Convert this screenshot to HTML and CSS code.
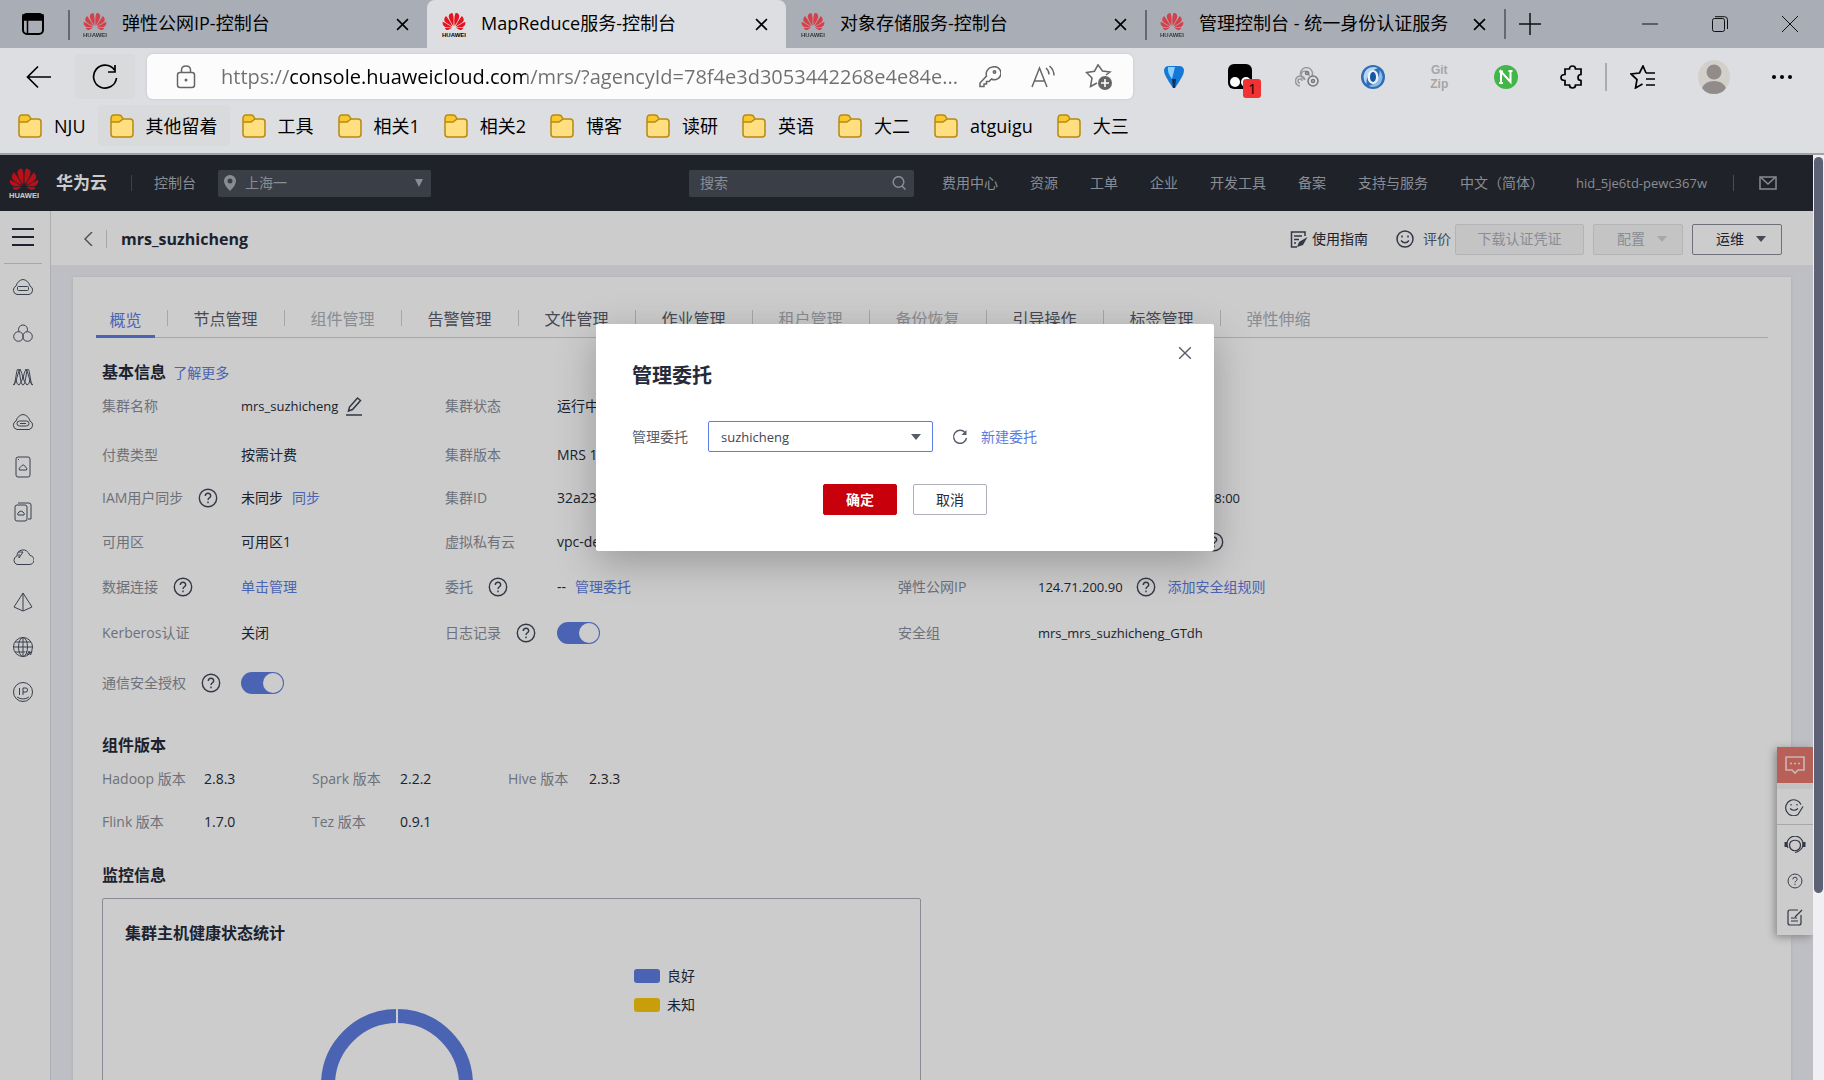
FILE: index.html
```html
<!DOCTYPE html>
<html lang="zh-CN">
<head>
<meta charset="utf-8">
<title>MapReduce服务-控制台</title>
<link rel="stylesheet" href="styles.css">
</head>
<body>
<svg class="defs" aria-hidden="true">
  <symbol id="petals" viewBox="0 2 24 20"><path d="M3.67 6.14S1.82 7.91 1.72 9.78v.35c.08 1.51 1.22 2.4 1.22 2.4 1.83 1.79 6.26 4.04 7.3 4.55 0 0 .06.03.1-.01l.02-.04v-.04C7.52 10.8 3.67 6.14 3.67 6.14zM9.65 18.6c-.02-.08-.1-.08-.1-.08l-7.38.26c.8 1.43 2.15 2.53 3.56 2.2.96-.25 3.16-1.78 3.88-2.3.06-.05.04-.09.04-.09zm.08-.78C6.49 15.63.21 12.28.21 12.28c-.15.46-.2.9-.21 1.3v.07c0 1.07.4 1.82.4 1.82.8 1.69 2.34 2.2 2.34 2.2.7.3 1.4.31 1.4.31.12.02 4.4 0 5.54 0 .05 0 .08-.05.08-.05v-.06c0-.03-.03-.05-.03-.05zM9.06 3.19a3.42 3.42 0 0 0-2.57 3.15v.41c.03.6.16 1.05.16 1.05.66 2.9 3.86 7.65 4.55 8.65.05.05.1.03.1.03a.1.1 0 0 0 .06-.1c1.06-10.6-1.11-13.42-1.11-13.42-.32.02-1.19.23-1.19.23zm8.299 2.27s-.49-1.8-2.44-2.28c0 0-.57-.14-1.17-.22 0 0-2.18 2.81-1.12 13.43.01.07.06.08.06.08.07.03.1-.03.1-.03.72-1.03 3.9-5.76 4.55-8.64 0 0 .36-1.4.02-2.34zm-2.92 13.07s-.07 0-.09.05c0 0-.01.07.03.1.7.51 2.85 2 3.88 2.3 0 0 .16.05.43.06h.14c.69-.02 1.9-.37 3-2.26l-7.4-.25zm7.83-8.41c.14-2.06-1.94-3.97-1.94-3.98 0 0-3.85 4.66-6.67 10.8 0 0-.03.08.02.13l.04.01h.06c1.06-.53 5.46-2.77 7.28-4.54 0 0 1.15-.93 1.21-2.42zm1.52 2.14s-6.28 3.37-9.52 5.55c0 0-.05.04-.03.11 0 0 .03.06.07.06 1.16 0 5.56 0 5.67-.02 0 0 .57-.02 1.27-.29 0 0 1.56-.5 2.37-2.27 0 0 .73-1.45.17-3.14z"/></symbol>
  <symbol id="brand" viewBox="0 0 24 25"><use href="#petals" x="0" y="0" width="24" height="19" class="brand-mark"/><text x="12" y="24.500" text-anchor="middle" class="brand-word">HUAWEI</text></symbol>
  <symbol id="x" viewBox="0 0 12 12"><path d="M1 1l10 10M11 1L1 11"/></symbol>
  <symbol id="folder" viewBox="0 0 24 24"><path d="M1 6v14q0 3 3 3h16q3 0 3-3V8q0-3-3-3h-8" fill="#ffdf80"/><path d="M1 5q0-4 3-4h5q2 0 3 2l1 2-3 3H1z" fill="#f9c82f"/><path d="M1 5q0-4 3-4h5q2 0 3 2l1 2h7q3 0 3 3v12q0 3-3 3H4q-3 0-3-3zM1 8h8l4-3" fill="none" stroke="#b68a10" stroke-width="1.500"/></symbol>
  <symbol id="help" viewBox="0 0 20 20"><circle cx="10" cy="10" r="8.700"/><path d="M7.300 8q0-2.800 2.700-2.800T12.700 8c0 1.700-2.700 2-2.700 4M10 13.500v1.700"/></symbol>
</svg>

<header class="browser">
  <div class="titlebar">
    <button class="tab-actions" aria-label="标签操作"><svg width="22" height="22" viewBox="0 0 22 22"><rect x="1" y="1" width="20" height="20" rx="4" fill="none" stroke="#000" stroke-width="2"/><path d="M1 2h20v5H1zM5.500 7v13" stroke="#000" stroke-width="1.500"/></svg></button>
    <nav class="tabs">
      <div class="tab faded"><svg class="favicon"><use href="#brand"/></svg><span>弹性公网IP-控制台</span><button class="tab-close" aria-label="关闭"><svg><use href="#x"/></svg></button></div>
      <div class="tab active"><svg class="favicon"><use href="#brand"/></svg><span>MapReduce服务-控制台</span><button class="tab-close" aria-label="关闭"><svg><use href="#x"/></svg></button></div>
      <div class="tab faded"><svg class="favicon"><use href="#brand"/></svg><span>对象存储服务-控制台</span><button class="tab-close" aria-label="关闭"><svg><use href="#x"/></svg></button></div>
      <div class="tab faded ruled"><svg class="favicon"><use href="#brand"/></svg><span>管理控制台 - 统一身份认证服务</span><button class="tab-close" aria-label="关闭"><svg><use href="#x"/></svg></button></div>
    </nav>
    <button class="new-tab" aria-label="新建标签页"><svg width="22" height="22" viewBox="0 0 22 22"><path d="M11 0v22M0 11h22" stroke="#111" stroke-width="1.500"/></svg></button>
    <div class="window-buttons">
      <button aria-label="最小化"><svg width="16" height="16" viewBox="0 0 16 16"><path d="M0 8h16"/></svg></button>
      <button aria-label="还原"><svg width="16" height="16" viewBox="0 0 16 16"><rect x=".5" y="2.500" width="12" height="13" rx="2"/><path d="M3 .7h9.500q3 0 3 3V13"/></svg></button>
      <button aria-label="关闭窗口"><svg width="16" height="16" viewBox="0 0 16 16"><path d="M0 0l16 16M16 0L0 16"/></svg></button>
    </div>
  </div>

  <div class="toolbar">
    <button class="nav-button" aria-label="返回"><svg width="26" height="24" viewBox="0 0 26 24"><path d="M25 12H2M12 1.500L1.500 12 12 22.500" class="ink"/></svg></button>
    <button class="nav-button hovered" aria-label="刷新"><svg width="26" height="26" viewBox="0 0 26 26"><path d="M22.500 6A11.500 11.500 0 1 0 24.500 14M23 1v7h-7" class="ink"/></svg></button>
    <div class="address">
      <svg width="20" height="24" viewBox="0 0 20 24"><rect x="1.500" y="7.500" width="17" height="15" rx="2.500" class="soft"/><path d="M5.500 7.500V5q0-4 4.500-4t4.500 4v2.500" class="soft"/><circle cx="10" cy="15" r="1.500" fill="#666"/></svg>
      <input type="text" aria-label="地址" value="https://console.huaweicloud.com/mrs/?agencyId=78f4e3d3053442268e4e84e...">
      <button aria-label="密码"><svg width="22" height="22" viewBox="0 0 22 22"><path d="M13.500 1a7 7 0 0 0-6 9L1 17v3.500h4V18h2.500v-2.500H10L12.500 13A6.500 6.500 0 1 0 13.500 1z" class="soft"/><circle cx="15.500" cy="6" r="1.200" class="soft"/></svg></button>
      <button aria-label="大声朗读"><svg width="24" height="24" viewBox="0 0 24 24"><path d="M1 22L8.500 3 16 22M3.500 16h10M15 3q3 2.500 3 6.500M18.500 1Q23 5 23 10.500" class="soft"/></svg></button>
      <button aria-label="收藏"><svg width="28" height="26" viewBox="0 0 28 26"><path d="M21 11l4-3-7.500-1L13 .8 9.500 7.200 1.500 8.500 7 14 5.500 22.500 12 19" class="soft"/><circle cx="20" cy="19" r="7" fill="#666"/><path d="M20 15v8M16 19h8" stroke="#fff" stroke-width="1.600"/></svg></button>
    </div>
    <div class="extensions">
      <button aria-label="Balloon"><svg width="22" height="24" viewBox="0 0 22 24"><path d="M1 6Q1 1 6 1h10q5 0 5 5 0 4-9 17h-2Q1 10 1 6z" fill="#1478d4"/><path d="M5 2h7L9 14Q4 8 5 2z" fill="#8bd0ff"/><path d="M9 14h4l-1 9h-2z" fill="#12305a"/></svg></button>
      <button class="with-badge" aria-label="扩展"><svg width="24" height="26" viewBox="0 0 24 26"><rect width="24" height="25" rx="6"/><circle cx="7" cy="18" r="5" fill="#fff"/><circle cx="18" cy="18" r="5" fill="#fff"/></svg><span class="badge">1</span></button>
      <button aria-label="扩展"><svg width="24" height="20" viewBox="0 0 24 20" fill="none" stroke="#777" stroke-width="1.500"><path d="M6 9a6 6 0 1 1 11 0M9 12a4 4 0 1 1 5-3" stroke="#999"/><circle cx="12" cy="6" r="1.500"/><path d="M5 19A5 5 0 0 1 6 9q3 0 4 4M5 16a2 2 0 1 1 2-2" stroke="#999"/><circle cx="18" cy="14" r="5"/><circle cx="18" cy="14" r="1.500"/></svg></button>
      <button aria-label="扩展"><svg width="26" height="26" viewBox="0 0 26 26"><circle cx="13" cy="13" r="12" fill="#2f6db5"/><path d="M14 3Q5 3 3.500 12q0 5 3 8Q6 8 18 4z" fill="#b5d6f2"/><path d="M12 23q9 0 10.500-9 0-5-3-8 .500 12-11 16z" fill="#8dbbe6"/><ellipse cx="13" cy="13" rx="5.500" ry="7" fill="#e8f2fb"/><ellipse cx="13" cy="13" rx="3" ry="5" fill="#1a55a0"/></svg></button>
      <button class="gitzip" aria-label="GitZip"><span>Git</span><span>Zip</span></button>
      <button class="green" aria-label="扩展"><svg width="24" height="24" viewBox="0 0 24 24"><circle cx="12" cy="12" r="12" fill="#43b649"/><path d="M7 18V6.500L16.500 17V6M5 6.500h4M14.500 6h4M5 18h4" fill="none" stroke="#fff" stroke-width="2"/></svg></button>
      <button aria-label="扩展管理"><svg width="24" height="24" viewBox="0 0 24 24"><path d="M5 4h4.500q0-3 3-3t3 3H21v5.500q-3 0-3 3t3 3V20h-5.500q0 3-3 3t-3-3H5v-4.500q-4 0-4-3t4-3z" class="ink"/></svg></button>
    </div>
    <div class="profile">
      <button aria-label="收藏夹"><svg width="26" height="24" viewBox="0 0 26 24"><path d="M16 8l-3-7-3.500 7L1 9l6 5.500L5.500 23l7-4M16 8h9M16 14h9M16 20h9" class="ink"/></svg></button>
      <button aria-label="个人资料"><svg width="32" height="34" viewBox="0 0 32 34"><ellipse cx="16" cy="17" rx="16" ry="17" fill="#d3d0cc"/><circle cx="16" cy="12" r="7.500" fill="#918c89"/><path d="M4 28q3-7 12-7t12 7q-4 6-12 6T4 28z" fill="#918c89"/></svg></button>
      <button aria-label="更多"><svg width="20" height="4" viewBox="0 0 20 4"><circle cx="2" cy="2" r="2"/><circle cx="10" cy="2" r="2"/><circle cx="18" cy="2" r="2"/></svg></button>
    </div>
  </div>

  <nav class="bookmarks">
    <a href="#"><svg><use href="#folder"/></svg>NJU</a>
    <a href="#" class="hovered"><svg><use href="#folder"/></svg>其他留着</a>
    <a href="#"><svg><use href="#folder"/></svg>工具</a>
    <a href="#"><svg><use href="#folder"/></svg>相关1</a>
    <a href="#"><svg><use href="#folder"/></svg>相关2</a>
    <a href="#"><svg><use href="#folder"/></svg>博客</a>
    <a href="#"><svg><use href="#folder"/></svg>读研</a>
    <a href="#"><svg><use href="#folder"/></svg>英语</a>
    <a href="#"><svg><use href="#folder"/></svg>大二</a>
    <a href="#"><svg><use href="#folder"/></svg>atguigu</a>
    <a href="#"><svg><use href="#folder"/></svg>大三</a>
  </nav>
</header>

<div class="viewport">
  <div class="console">
    <header class="cloud-bar">
      <a href="#" class="cloud-logo"><svg width="30" height="32"><use href="#brand"/></svg><strong>华为云</strong></a>
      <a href="#" class="console-link">控制台</a>
      <div class="region">
        <svg width="12" height="16" viewBox="0 0 12 16"><path d="M6 0a6 6 0 0 0-6 6q0 4 6 10 6-6 6-10a6 6 0 0 0-6-6zm0 3.500a2.500 2.500 0 1 1 0 5 2.500 2.500 0 0 1 0-5z" fill="#adb0b8" fill-rule="evenodd"/></svg>
        <select aria-label="区域"><option>上海一</option></select>
      </div>
      <div class="search"><input type="text" placeholder="搜索" aria-label="搜索"><svg width="14" height="14" viewBox="0 0 14 14"><circle cx="6.500" cy="6" r="5.300"/><path d="M10 10l3.500 3.500"/></svg></div>
      <nav class="cloud-menu">
        <a href="#">费用中心</a><a href="#">资源</a><a href="#">工单</a><a href="#">企业</a><a href="#">开发工具</a><a href="#">备案</a><a href="#">支持与服务</a><a href="#">中文（简体）</a><a href="#" class="latin">hid_5je6td-pewc367w</a>
      </nav>
      <button class="mail" aria-label="消息"><svg width="18" height="14" viewBox="0 0 18 14"><rect x="1" y="1" width="16" height="12"/><path d="M2 1.500l7 6.500 7-6.500"/></svg></button>
    </header>

    <div class="workspace">
      <aside class="rail">
        <button class="menu" aria-label="菜单"><svg width="22" height="18" viewBox="0 0 22 18"><path d="M0 1h22M0 9h22M0 17h22" stroke="#252b3a" stroke-width="2"/></svg></button>
        <a href="#" aria-label="弹性云服务器"><svg viewBox="0 0 22 22"><path d="M5 18.500h12a4.500 4.500 0 0 0 1-8.500Q16 4 11 3.500 6 4 4 10a4.500 4.500 0 0 0 1 8.500z"/><rect x="5.500" y="10.500" width="11" height="4" rx="1"/></svg></a>
        <a href="#" aria-label="弹性伸缩"><svg viewBox="0 0 22 22"><circle cx="6.500" cy="15.500" r="4.800"/><circle cx="15.500" cy="15.500" r="4.800"/><path d="M7 10.500a4.500 4.500 0 1 1 8 0"/></svg></a>
        <a href="#" aria-label="MapReduce"><svg viewBox="0 0 22 22"><path d="M1 19C4 19 4 3 6 3s2 16 5 16 3-16 5-16 2 16 5 16M2 19C5 15 5 8 8 3q2 4 3 9 1-5 3-9c3 5 3 12 6 16M4 14q1 5 3 5 3-3 4-8 1 5 4 8 2 0 3-5" stroke-width="1"/></svg></a>
        <a href="#" aria-label="云硬盘"><svg viewBox="0 0 22 22"><path d="M5 18.500h12a4.500 4.500 0 0 0 1-8.500Q16 4 11 3.500 6 4 4 10a4.500 4.500 0 0 0 1 8.500z"/><rect x="5" y="10" width="12" height="5" rx="2.500"/><path d="M8 12.500h6"/></svg></a>
        <a href="#" aria-label="存储"><svg viewBox="0 0 22 22"><rect x="4" y="1" width="14" height="20" rx="2"/><path d="M7.500 14h7q1-2-1-3-2-4-5 0-2 1-1 3zM6 3.500h1"/></svg></a>
        <a href="#" aria-label="备份"><svg viewBox="0 0 22 22"><rect x="3" y="4" width="12" height="16" rx="2"/><path d="M6 2h11q2 0 2 2v14h-3M6 14h6q1-2-1-3-2-2-4 0-2 1-1 3z"/></svg></a>
        <a href="#" aria-label="云连接"><svg viewBox="0 0 22 22"><path d="M5 18.500h12a4.500 4.500 0 0 0 1-9Q15 3 10 4 5 5 5 10a4.500 4.500 0 0 0 0 8.500zM6 6h5l-4 6v-4"/></svg></a>
        <a href="#" aria-label="函数"><svg viewBox="0 0 22 22"><path d="M11 2L2 16l9 4 9-4zM11 2v18"/></svg></a>
        <a href="#" aria-label="域名"><svg viewBox="0 0 22 22"><circle cx="11" cy="11" r="9.500"/><ellipse cx="11" cy="11" rx="4.500" ry="9.500"/><path d="M11 1.500v19M1.500 11h19M3 6h16M3 16h10M14 15l1.500 4 1.500-4 1.500 4 1.500-4"/></svg></a>
        <a href="#" aria-label="弹性公网IP"><svg viewBox="0 0 22 22"><circle cx="11" cy="11" r="9.500"/><path d="M7.500 7v7M11 14V7h3q1.500 0 1.500 2T14 11h-3M5 16q6 4 12 0"/></svg></a>
      </aside>

      <main>
        <div class="page-head">
          <button class="back" aria-label="返回"><svg width="9" height="14" viewBox="0 0 9 14"><path d="M8 0L1 7l7 7"/></svg></button>
          <h1>mrs_suzhicheng</h1>
          <a href="#" class="guide"><svg width="18" height="17" viewBox="0 0 18 17"><path d="M15 5V1H1.500v15H7M4 5h8M4 8.500h5M4 12h2"/><path d="M17.500 6L9 11l-2 5 6-2z" fill="#404657" stroke="none"/></svg>使用指南</a>
          <a href="#" class="rate"><svg width="18" height="18" viewBox="0 0 18 18"><circle cx="9" cy="9" r="8"/><path d="M5 10.500q4 4.500 8 0M6 5.500v2M12 5.500v2"/></svg>评价</a>
          <div class="page-actions">
            <button class="wide" disabled>下载认证凭证</button>
            <button class="drop" disabled>配置</button>
            <button class="drop">运维</button>
          </div>
        </div>

        <section class="card">
          <nav class="card-tabs">
            <a href="#" class="current">概览</a><a href="#">节点管理</a><a href="#" class="off">组件管理</a><a href="#">告警管理</a><a href="#">文件管理</a><a href="#">作业管理</a><a href="#" class="off">租户管理</a><a href="#" class="off">备份恢复</a><a href="#">引导操作</a><a href="#">标签管理</a><a href="#" class="off">弹性伸缩</a>
          </nav>

          <h2>基本信息 <a href="#">了解更多</a></h2>
          <dl class="facts">
            <dt>集群名称</dt><dd class="latin">mrs_suzhicheng<button class="edit" aria-label="编辑"><svg width="16" height="20" viewBox="0 0 16 20"><path d="M2.500 15L3.500 11 11.500 2l3 2.500-8 9zM0 19h16"/></svg></button></dd>
            <dt>集群状态</dt><dd>运行中</dd>
            <dt></dt><dd></dd>

            <dt>付费类型</dt><dd>按需计费</dd>
            <dt>集群版本</dt><dd>MRS 1</dd>
            <dt></dt><dd></dd>

            <dt>IAM用户同步<svg class="help"><use href="#help"/></svg></dt><dd>未同步<a href="#" class="after">同步</a></dd>
            <dt>集群ID</dt><dd>32a23</dd>
            <dt></dt><dd><span class="created latin">08:00</span></dd>

            <dt>可用区</dt><dd>可用区1</dd>
            <dt>虚拟私有云</dt><dd>vpc-de</dd>
            <dt></dt><dd><span class="subnet"><svg class="help"><use href="#help"/></svg></span></dd>

            <dt>数据连接<svg class="help"><use href="#help"/></svg></dt><dd><a href="#">单击管理</a></dd>
            <dt>委托<svg class="help"><use href="#help"/></svg></dt><dd>--<a href="#" class="after">管理委托</a></dd>
            <dt>弹性公网IP</dt><dd class="eip"><span class="latin">124.71.200.90</span><svg class="help"><use href="#help"/></svg><a href="#" class="after">添加安全组规则</a></dd>

            <dt>Kerberos认证</dt><dd>关闭</dd>
            <dt><label for="log">日志记录</label><svg class="help"><use href="#help"/></svg></dt><dd><input type="checkbox" class="toggle" id="log" checked></dd>
            <dt>安全组</dt><dd class="latin">mrs_mrs_suzhicheng_GTdh</dd>

            <dt><label for="auth">通信安全授权</label><svg class="help"><use href="#help"/></svg></dt><dd><input type="checkbox" class="toggle" id="auth" checked></dd>
          </dl>

          <h2>组件版本</h2>
          <dl class="versions">
            <dt>Hadoop 版本</dt><dd>2.8.3</dd><dt>Spark 版本</dt><dd>2.2.2</dd><dt>Hive 版本</dt><dd>2.3.3</dd>
            <dt>Flink 版本</dt><dd>1.7.0</dd><dt>Tez 版本</dt><dd>0.9.1</dd>
          </dl>

          <h2>监控信息</h2>
          <div class="panel">
            <h3>集群主机健康状态统计</h3>
            <div class="chart">
              <svg width="152" height="152" viewBox="0 0 152 152"><circle cx="76" cy="76" r="69" fill="none" stroke="#5e7ce0" stroke-width="14"/><path d="M76 0v15" stroke="#fff" stroke-width="2"/></svg>
              <ul><li class="good">良好</li><li class="unknown">未知</li></ul>
            </div>
          </div>
        </section>
      </main>
    </div>

    <aside class="float-tools">
      <button class="chat" aria-label="咨询"><svg width="22" height="20" viewBox="0 0 22 20"><path d="M2 2h18v13h-6l-3 3-3-3H2z"/><path d="M6 8.500h2M10 8.500h2M14 8.500h2"/></svg></button>
      <div class="float-list">
        <button aria-label="评价"><svg width="20" height="18" viewBox="0 0 20 18"><path d="M13 16.500a8 8 0 1 1 3-10M13 16.500l5-8M6 6v1.500M12 6v1.500M5 10.500q4 3.500 8 0"/></svg></button>
        <button aria-label="客服"><svg width="22" height="18" viewBox="0 0 22 18"><path d="M4 12a8 8 0 1 1 14 0q-3 4-7 4.500M7 5.500Q11 3 15 5.500a5.500 5.500 0 1 1-8 0"/><path d="M2 6v5M20 6v5" stroke-width="3"/></svg></button>
        <button aria-label="帮助"><svg width="16" height="16"><use href="#help"/></svg></button>
        <button aria-label="反馈"><svg width="16" height="18" viewBox="0 0 16 18"><path d="M11 2H3Q1 2 1 4v11q0 2 2 2h9q2 0 2-2V7M15 2L8 9M4 10h6M4 13h7"/></svg></button>
      </div>
    </aside>

    <div class="mask">
      <form class="dialog" role="dialog" aria-labelledby="dialog-title">
        <button type="button" class="dialog-close" aria-label="关闭"><svg width="14" height="14"><use href="#x"/></svg></button>
        <h2 id="dialog-title">管理委托</h2>
        <div class="field">
          <label for="agency">管理委托</label>
          <div class="select-box"><select id="agency" class="latin"><option>suzhicheng</option></select></div>
          <button type="button" class="refresh" aria-label="刷新"><svg width="16" height="16" viewBox="0 0 16 16"><path d="M13 3.500A6.500 6.500 0 1 0 14.500 9"/><path d="M14.500 1v5h-5z" fill="#575d6c" stroke="none"/></svg></button>
          <a href="#">新建委托</a>
        </div>
        <div class="dialog-actions"><button type="button" class="primary">确定</button><button type="button">取消</button></div>
      </form>
    </div>
  </div>
  <div class="scrollbar"><div class="thumb"></div></div>
</div>
</body>
</html>
```
FILE: styles.css
```css
* { box-sizing: border-box; }
body {
  margin: 0;
  height: 100vh;
  display: flex;
  flex-direction: column;
  overflow: hidden;
  font: 14px/20px "Open Sans", "Noto Sans CJK SC", sans-serif;
  color: #252b3a;
}
button, input, select { font: inherit; color: inherit; margin: 0; padding: 0; border: 0; background: none; border-radius: 0; outline: 0; }
button { display: flex; align-items: center; justify-content: center; flex: none; }
a { color: inherit; text-decoration: none; white-space: nowrap; }
svg { flex: none; display: block; }
.defs { display: none; }
h1, h2, h3, dl, dd, ul { margin: 0; padding: 0; }
.latin { font-size: 13px; }
.brand-mark { fill: #e5141f; }
.brand-word { font: bold 6px "Liberation Sans", sans-serif; fill: currentColor; }

/* browser frame */
.browser { flex: none; height: 155px; background: #dddee2; border-bottom: 2px solid #9fa3a7; color: #000; font-size: 18px; }
.titlebar { height: 48px; display: flex; align-items: center; background: #a9aeb6; }
.tab-actions { width: 68px; height: 48px; padding-right: 2px; }
.tabs { display: flex; width: 1436px; }
.tab { flex: 1; min-width: 0; height: 48px; display: flex; align-items: center; padding: 0 18px 0 15px; }
.tab span { flex: 1; margin-left: 15px; white-space: nowrap; overflow: hidden; line-height: 28px; padding-bottom: 2px; }
.tab.active { background: #dddee2; border-radius: 8px 8px 0 0; }
.tab:first-child, .ruled { background: linear-gradient(#666a70, #666a70) 0 10px / 2px 30px no-repeat; }
.favicon { width: 24px; height: 25px; }
.faded .favicon { opacity: .7; }
.tab-close { width: 14px; height: 24px; }
.tab-close svg { width: 13px; height: 13px; stroke: #000; stroke-width: 1.5; }
.new-tab { width: 50px; height: 30px; border-left: 2px solid #666a70; }
.window-buttons { margin-left: auto; display: flex; gap: 54px; padding-right: 26px; fill: none; stroke: #111; }

.toolbar { height: 57px; display: flex; align-items: center; padding: 0 32px 0 9px; }
.ink { fill: none; stroke: #000; stroke-width: 1.7; }
.soft { fill: none; stroke: #666; stroke-width: 1.5; }
.nav-button { width: 60px; height: 45px; margin-right: 6px; border-radius: 4px; }
.nav-button.hovered { background: #d9dadc; margin-right: 12px; }
.address { flex: 1; height: 45px; display: flex; align-items: center; gap: 30px; padding: 0 20px 0 29px; background: #fcfcfc; border-radius: 6px; box-shadow: 0 0 3px #c4c5c9; }
.address input {
  flex: 1; min-width: 0; height: 40px; margin: 0 -18px 0 -5px; font-size: 20px; color: #6f6f6f;
  background: linear-gradient(90deg, #6f6f6f 68px, #000 68px, #000 305px, #6f6f6f 305px);
  -webkit-background-clip: text; background-clip: text; -webkit-text-fill-color: transparent;
}
.extensions { display: flex; width: 474px; padding-left: 8px; border-right: 2px solid #a9abaf; height: 28px; align-items: center; }
.extensions button { flex: 1; height: 28px; }
.with-badge { position: relative; }
.badge { position: absolute; left: 36px; top: 16px; width: 18px; height: 19px; border-radius: 3px; background: #f03232; font-size: 14px; line-height: 19px; }
.extensions .gitzip { flex-direction: column; font: bold 12px/14px "Liberation Sans", sans-serif; color: #a5a5a5; }
.profile { display: flex; align-items: center; gap: 42px; padding-left: 23px; }

.bookmarks { display: flex; padding: 0 6px; }
.bookmarks a { display: flex; align-items: center; gap: 12px; height: 41px; padding: 0 12px; line-height: 26px; }
.bookmarks svg { width: 24px; height: 24px; }
.bookmarks .hovered { background: #d9dadc; border-radius: 4px; }

.viewport { flex: 1; min-height: 0; display: flex; }
.console { flex: 1; min-width: 0; position: relative; overflow: hidden; display: flex; flex-direction: column; }
.scrollbar { width: 11px; padding: 2px 1px; background: #f0f0f4; }
.thumb { height: 736px; border-radius: 5px; background: #5c6175; }

/* cloud bar */
.cloud-bar { flex: none; height: 56px; display: flex; align-items: center; background: #272b34; color: #adb0b8; padding: 0 36px 0 9px; }
.cloud-logo { display: flex; align-items: center; gap: 17px; color: #fff; font-size: 17px; width: 123px; border-right: 1px solid #4c505a; height: 16px; }
.console-link { margin: 0 22px; }
.region, .search { display: flex; align-items: center; height: 27px; background: #494e59; border-radius: 2px; }
.region { width: 213px; padding: 0 8px 0 6px; gap: 9px; }
.region select { flex: 1; appearance: none; height: 24px; }
.region::after { content: ""; border: 4px solid transparent; border-top: 8px solid #adb0b8; border-bottom: 0; }
.search { width: 225px; margin-left: auto; padding: 0 8px 0 11px; }
.search input { flex: 1; min-width: 0; }
.search input::placeholder { color: #adb0b8; opacity: 1; }
.search svg, .mail svg { fill: none; stroke: #adb0b8; stroke-width: 1.5; }
.cloud-menu { display: flex; gap: 32px; margin-left: 28px; }
.mail { margin-left: 26px; padding-left: 25px; border-left: 1px solid #5d616b; height: 16px; }

/* left rail */
.workspace { flex: 1; display: flex; background: #eeeff5; }
.rail { width: 51px; flex: none; background: #fff; border-right: 1px solid #d9dadf; display: flex; flex-direction: column; fill: none; stroke: #4a5062; }
.menu { height: 53px; margin: 0 8px 0 4px; border-bottom: 1px solid #d0d1d6; }
.rail a { height: 45px; display: flex; align-items: center; padding-left: 12px; }
.rail a svg { width: 22px; height: 22px; }

main { flex: 1; min-width: 0; }
.page-head { height: 54px; display: flex; align-items: center; background: #fff; padding: 2px 31px 0 32px; }
.back { width: 24px; height: 18px; border-right: 1px solid #d0d1d6; padding-right: 13px; fill: none; stroke: #575d6c; stroke-width: 1.4; }
h1 { font-size: 16px; line-height: 24px; margin: 0 auto 0 14px; }
.guide, .rate { display: flex; align-items: center; fill: none; stroke: #404657; stroke-width: 1.5; }
.guide { gap: 4px; margin-right: 28px; }
.rate { gap: 9px; color: #575d6c; margin-right: 4px; }
.page-actions { display: flex; gap: 9px; }
.page-actions button { width: 90px; height: 31px; border: 1px solid #8a8e99; border-radius: 2px; gap: 12px; }
.page-actions .wide { width: 129px; }
.page-actions .drop { padding-left: 8px; }
.page-actions button:disabled { color: #adb0b8; background: #f5f5f6; border-color: #dfe1e6; }
.drop::after, .select-box::after { content: ""; border: 5px solid transparent; border-top: 6px solid #575d6c; border-bottom: 0; }
.drop:disabled::after { border-top-color: #d0d1d6; }

.card { margin: 12px 22px 0; padding: 20px 23px 0; height: 820px; background: #fff; box-shadow: 0 0 3px #d6d7dc; }
.card-tabs { display: flex; align-items: center; height: 41px; border-bottom: 1px solid #d0d1d6; font-size: 16px; color: #575d6c; }
.card-tabs a { width: 117px; text-align: center; line-height: 24px; padding-top: 3px; background: linear-gradient(#d0d1d6, #d0d1d6) 0 6px / 1px 16px no-repeat; }
.card-tabs .current { width: 59px; height: 41px; line-height: 40px; margin-right: 12px; color: #5e7ce0; background: none; border-bottom: 3px solid #5e7ce0; }
.card-tabs .off { color: #adb0b8; }
.card > h2 { font-size: 16px; line-height: 24px; margin: 0 6px; }
.card-tabs + h2 { padding-top: 22px; }
h2 a { font-size: 14px; font-weight: normal; color: #5e7ce0; margin-left: 3px; }
.facts { display: grid; grid-template-columns: 139px 204px 112px 341px 140px 1fr; grid-template-rows: 42px 56px 30px 58px 32px 60px 40px; margin: 0 6px 30px; }
.facts dt, .facts dd { display: flex; align-items: center; white-space: nowrap; }
.facts dt, .versions dt { color: #8a8e99; }
.facts a { color: #5e7ce0; }
.facts .after { margin-left: 9px; }
.help { width: 20px; height: 20px; margin-left: 15px; fill: none; stroke: #404657; stroke-width: 1.4; }
.edit { margin-left: 8px; fill: none; stroke: #404657; stroke-width: 1.5; }
.created { width: 202px; text-align: right; }
.subnet { width: 186px; display: flex; justify-content: flex-end; }
.eip .help { margin: 0 3px 0 13px; }
.toggle { appearance: none; width: 43px; height: 22px; border-radius: 11px; background: #5e7ce0; display: flex; justify-content: flex-end; padding: 1px; }
.toggle::before { content: ""; width: 20px; height: 20px; border-radius: 50%; background: #fff; }
.versions { display: grid; grid-template-columns: 102px 108px 88px 108px 81px 1fr; grid-auto-rows: 43px; align-items: center; margin: 0 6px 20px; }
.panel { width: 819px; height: 300px; margin: 11px 6px 0; border: 1px solid #adb0b8; border-radius: 2px; padding: 22px; }
h3 { font-size: 16px; line-height: 24px; }
.chart { display: flex; justify-content: space-between; padding: 16px 203px 0 196px; }
.chart > svg { margin-top: 48px; }
.chart ul { list-style: none; }
.chart li { display: flex; align-items: center; gap: 7px; height: 29px; }
.chart li::before { content: ""; width: 26px; height: 14px; border-radius: 3px; background: #5e7ce0; }
.chart .unknown::before { background: #fac70d; }

/* floating helpers at the window edge */
.float-tools { position: absolute; right: 0; top: 592px; width: 36px; box-shadow: -2px 2px 8px #aaa; background: #f4f4f4; fill: none; stroke: #404657; stroke-width: 1.2; }
.float-tools button { width: 36px; height: 36px; }
.float-tools .chat { background: #e7776e; stroke: #fbe5e3; stroke-width: 1.6; margin-bottom: 6px; }
.float-list { background: #fff; }
.float-list button:first-child { border-bottom: 1px solid #d0d1d6; margin-bottom: 2px; }

/* dialog */
.mask { position: absolute; inset: 0; padding-right: 3px; background: rgba(0, 0, 0, .2); }
.dialog { position: relative; width: 618px; height: 227px; margin: 169px auto 0; padding: 38px 36px 0; background: #fff; border-radius: 2px; box-shadow: 0 12px 40px rgba(0, 0, 0, .25); }
.dialog-close { position: absolute; top: 18px; right: 18px; width: 22px; height: 22px; stroke: #575d6c; stroke-width: 1.2; }
.dialog h2 { font-size: 20px; line-height: 28px; }
.field { display: flex; align-items: center; margin-top: 31px; color: #575d6c; }
.select-box { display: flex; align-items: center; width: 225px; height: 31px; margin: 0 19px 0 20px; padding: 0 11px 0 12px; border: 1px solid #5e7ce0; border-radius: 2px; color: #404657; }
.select-box select { flex: 1; appearance: none; height: 28px; }
.refresh { margin-right: 13px; fill: none; stroke: #575d6c; stroke-width: 1.4; }
.field a { color: #5e7ce0; }
.dialog-actions { display: flex; justify-content: center; gap: 16px; margin-top: 32px; }
.dialog-actions button { width: 74px; height: 31px; border: 1px solid #adb0b8; border-radius: 2px; }
.dialog-actions .primary { background: #c7000b; border-color: #c7000b; color: #fff; font-weight: bold; }
```
